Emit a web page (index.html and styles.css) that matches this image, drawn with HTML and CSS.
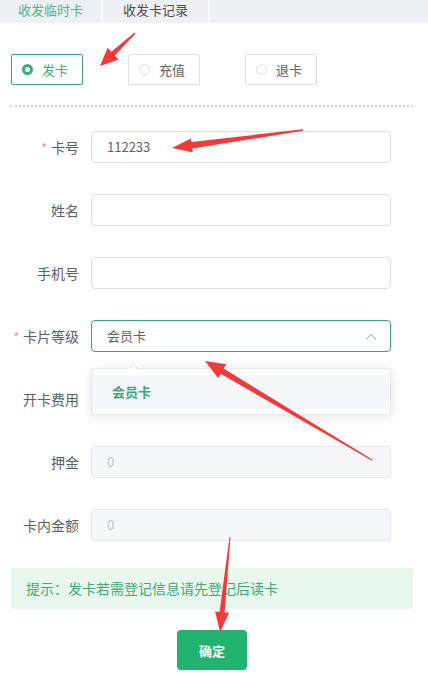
FILE: index.html
```html
<!DOCTYPE html>
<html lang="zh">
<head>
<meta charset="utf-8">
<link rel="stylesheet" href="styles.css">
</head>
<body>
<div class="page">
  <div class="tabs">
    <div class="tab active">收发临时卡</div>
    <div class="tab">收发卡记录</div>
  </div>

  <div class="radios">
    <label class="radio checked"><span class="dot"></span>发卡</label>
    <label class="radio"><span class="dot"></span>充值</label>
    <label class="radio"><span class="dot"></span>退卡</label>
  </div>

  <div class="divider"></div>

  <div class="form">
    <div class="row">
      <div class="label"><span class="req">*</span>卡号</div>
      <div class="input">112233</div>
    </div>
    <div class="row">
      <div class="label">姓名</div>
      <div class="input"></div>
    </div>
    <div class="row">
      <div class="label">手机号</div>
      <div class="input"></div>
    </div>
    <div class="row">
      <div class="label"><span class="req">*</span>卡片等级</div>
      <div class="input select">会员卡
        <svg class="chev" width="12" height="8" viewBox="0 0 12 8"><path d="M1 6.5 L6 1.5 L11 6.5" fill="none" stroke="#c0c4cc" stroke-width="1.3"/></svg>
      </div>
    </div>
    <div class="row">
      <div class="label">开卡费用</div>
      <div class="field-wrap">
        <div class="input disabled"></div>
        <div class="dropdown">
          <span class="notch"></span>
          <div class="option">会员卡</div>
        </div>
      </div>
    </div>
    <div class="row">
      <div class="label">押金</div>
      <div class="input disabled">0</div>
    </div>
    <div class="row">
      <div class="label">卡内金额</div>
      <div class="input disabled">0</div>
    </div>
  </div>

  <div class="tip">提示：发卡若需登记信息请先登记后读卡</div>

  <div class="actions">
    <button class="btn">确定</button>
  </div>

  <svg class="arrows" width="428" height="694" viewBox="0 0 428 694">
    <polygon fill="#f23a3a" points="134.5,32.4 111.4,51.8 107.6,47.8 100,66 118.6,59.5 114.8,55.5 135.5,33.6"/>
    <polygon fill="#f23a3a" points="302.9,129.3 191.4,142.0 190.9,138.4 172,148 192.8,152.2 192.2,148.6 303.1,130.7"/>
    <polygon fill="#f23a3a" points="372.3,459.6 223.7,368.6 226.3,364.3 205,361 218.1,378.1 220.7,373.8 371.7,460.4"/>
    <polygon fill="#f23a3a" points="229.5,536.9 219.6,611.8 215.1,611.4 220,632 229.1,612.8 224.6,612.4 230.5,537.1"/>
  </svg>
</div>
</body>
</html>
```

FILE: styles.css
```css
* { box-sizing: border-box; }
html, body { margin: 0; padding: 0; background: #fff; }
body {
  font-family: "Noto Sans CJK SC", "Noto Sans", sans-serif;
  font-size: 13px;
  color: #606266;
}
.page {
  position: relative;
  width: 428px;
  height: 694px;
  overflow: hidden;
}
.tabs {
  display: flex;
  height: 23px;
  background: #eef0f3;
  border-bottom: 1px solid #f2f3f5;
}
.tab {
  width: 103px;
  line-height: 19px;
  text-align: center;
  color: #4a4d52;
  font-size: 13px;
  border-right: 2px solid #f7f8fa;
}
.tab + .tab { width: 107px; }
.tab.active { color: #4cb68a; }

.radios {
  display: flex;
  gap: 45px;
  padding: 31px 0 0 11px;
}
.radio {
  display: flex;
  align-items: center;
  width: 72px;
  height: 31px;
  border: 1px solid #dcdfe6;
  border-radius: 2px;
  padding-left: 10px;
  color: #606266;
  font-size: 13px;
}
.radio .dot {
  width: 11px;
  height: 11px;
  border-radius: 50%;
  border: 1px solid #dcdfe6;
  margin-right: 9px;
  background: #fff;
}
.radio.checked { border-color: #3f9f7b; color: #4aa883; }
.radio.checked .dot {
  border: 3px solid #3bab7c;
  background: #fff;
}

.divider {
  margin: 20px 15px 0 10px;
  border-top: 2px dotted #d3d5d8;
}

.form {
  display: flex;
  flex-direction: column;
  gap: 31px;
  padding-top: 24px;
}
.row {
  display: flex;
  align-items: center;
}
.label {
  width: 79px;
  text-align: right;
  margin-right: 12px;
  color: #5c5f66;
  font-size: 14px;
}
.req { color: #f38d8d; margin-right: 4px; font-size: 12px; }
.input {
  width: 300px;
  height: 32px;
  border: 1px solid #dcdfe6;
  border-radius: 4px;
  padding-left: 15px;
  line-height: 30px;
  color: #606266;
  font-size: 13px;
  background: #fff;
}
.input.select {
  position: relative;
  border-color: #3f9f7b;
}
.chev {
  position: absolute;
  right: 13px;
  top: 12px;
}
.input.disabled {
  background: #f5f7fa;
  border-color: #e4e7ed;
  color: #c0c4cc;
}
.field-wrap { position: relative; }
.dropdown {
  position: absolute;
  left: 0;
  top: -15px;
  width: 300px;
  height: 47px;
  background: #fff;
  border: 1px solid #e4e7ed;
  border-radius: 4px;
  box-shadow: 0 2px 12px rgba(0,0,0,0.1);
  padding-top: 6px;
}
.notch {
  position: absolute;
  top: -4px;
  left: 38px;
  width: 7px;
  height: 7px;
  background: #fff;
  border-left: 1px solid #e4e7ed;
  border-top: 1px solid #e4e7ed;
  transform: rotate(45deg);
}
.option {
  height: 34px;
  line-height: 34px;
  background: #f5f7fa;
  padding-left: 20px;
  color: #3aa878;
  font-weight: bold;
  font-size: 13px;
}

.tip {
  margin: 27px 15px 0 11px;
  height: 41px;
  line-height: 41px;
  background: #e9f8ef;
  color: #3eaa78;
  padding-left: 15px;
  font-size: 14px;
}

.actions {
  display: flex;
  padding: 21px 0 0 177px;
}
.btn {
  width: 70px;
  height: 40px;
  border: none;
  border-radius: 4px;
  background: #22b46e;
  color: #fff;
  font-family: "Noto Sans CJK SC", sans-serif;
  font-size: 13px;
  font-weight: bold;
}

.arrows {
  position: absolute;
  left: 0;
  top: 0;
  pointer-events: none;
}
```
